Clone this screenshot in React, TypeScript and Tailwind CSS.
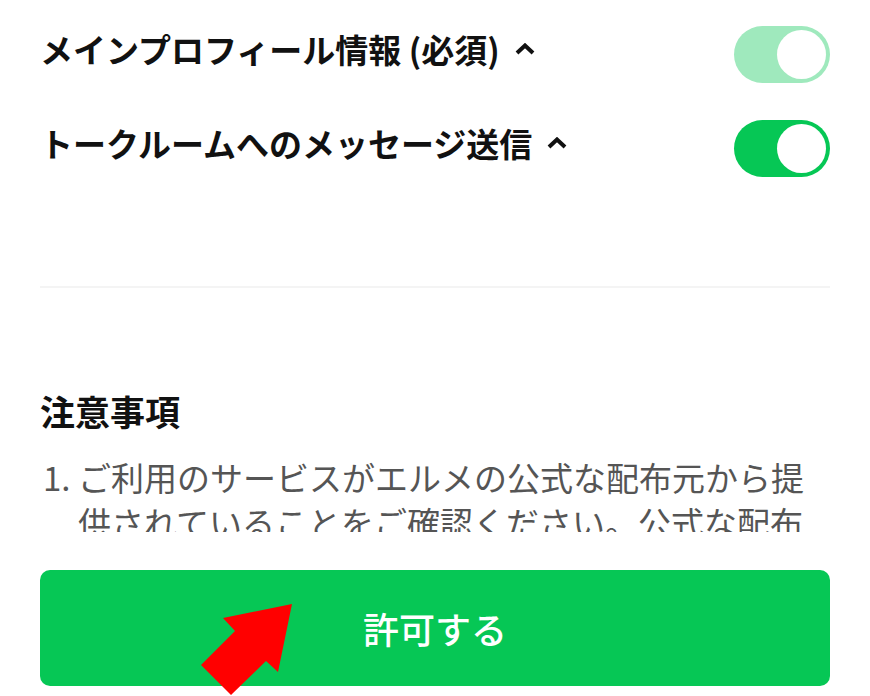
import React from 'react';

const FONT = { fontFamily: '"Noto Sans CJK JP", "Noto Sans", sans-serif' };

function Chevron() {
  return (
    <svg width="22" height="12" viewBox="0 0 22 12" className="shrink-0">
      <polyline points="3,10 11,2.5 19,10" fill="none" stroke="#111" strokeWidth="4" strokeLinejoin="miter" />
    </svg>
  );
}

function Toggle({ light }: { light?: boolean }) {
  return (
    <div
      className={`w-[96px] h-[57px] rounded-full flex items-center justify-end pr-[4px] shrink-0 ${
        light ? 'bg-[#9fe9bd]' : 'bg-[#06c755]'
      }`}
    >
      <div className="w-[49px] h-[49px] rounded-full bg-white" />
    </div>
  );
}

function PermissionRow({ label, light }: { label: string; light?: boolean }) {
  return (
    <div className="flex items-center justify-between h-[58px]">
      <div className="flex items-center gap-[14px] pb-[10px]">
        <span className="text-[33px] font-bold text-[#111] leading-[44px]">{label}</span>
        <Chevron />
      </div>
      <Toggle light={light} />
    </div>
  );
}

export default function App() {
  return (
    <div className="relative w-full h-[696px] bg-white flex flex-col overflow-hidden" style={FONT}>
      <div className="h-[532px] overflow-hidden px-[40px] pt-[25px] shrink-0">
        <PermissionRow label="メインプロフィール情報 (必須)" light />
        <div className="mt-[36px]">
          <PermissionRow label="トークルームへのメッセージ送信" />
        </div>

        <div className="mt-[109px] h-[2px] bg-[#f4f4f4]" />

        <h2 className="mt-[99px] text-[35px] font-bold text-[#111] leading-[48px]">注意事項</h2>

        <div className="mt-[20px] flex text-[33px] leading-[45px] text-[#555]">
          <span className="w-[38px] shrink-0 pl-[3px]">1.</span>
          <p>
            ご利用のサービスがエルメの公式な配布元から提供されていることをご確認ください。公式な配布元以外から提供されているサービスを利用すると、情報が漏えいするおそれがあります。
          </p>
        </div>
      </div>

      <div className="px-[40px] pt-[38px]">
        <button className="w-full h-[116px] rounded-[10px] bg-[#06c755] text-white text-[36px] font-medium flex items-center justify-center">
          許可する
        </button>
      </div>

      <svg
        className="absolute left-[190px] top-[595px] overflow-visible"
        width="110"
        height="101"
        viewBox="0 0 110 101"
      >
        <polygon points="102,9 33,23 45,36 11,70 41,100 76,66 88,77" fill="#ff0000" />
      </svg>
    </div>
  );
}
